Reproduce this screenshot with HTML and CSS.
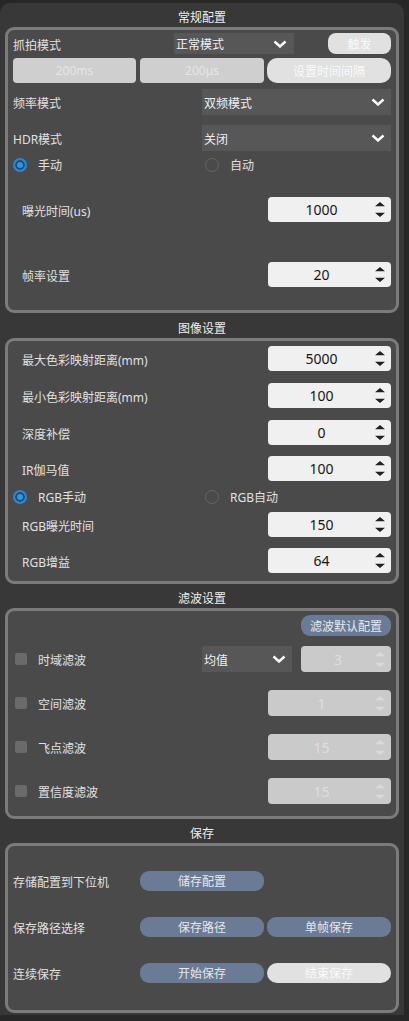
FILE: index.html
```html
<!DOCTYPE html>
<html lang="zh-CN">
<head>
<meta charset="utf-8">
<title>配置</title>
<link rel="stylesheet" href="styles.css">
</head>
<body>
<div class="window">
  <div class="sec-title t1">常规配置</div>
  <div class="group g1">
    <div class="row h21 pt3">
      <span class="label w161">抓拍模式</span>
      <div class="combo w120 cr7"><span>正常模式</span><svg class="chev" viewBox="0 0 14 8"><polyline points="1.5,1.5 7,6.5 12.5,1.5"/></svg></div>
      <button class="btn light w63 push">触发</button>
    </div>
    <div class="row h25 mt4">
      <button class="btn dis w123">200ms</button>
      <button class="btn dis w124 ml4">200μs</button>
      <button class="btn light round w124 ml3">设置时间间隔</button>
    </div>
    <div class="row h26 mt6">
      <span class="label">频率模式</span>
      <div class="combo w189 push"><span>双频模式</span><svg class="chev" viewBox="0 0 14 8"><polyline points="1.5,1.5 7,6.5 12.5,1.5"/></svg></div>
    </div>
    <div class="row h26 mt10">
      <span class="label">HDR模式</span>
      <div class="combo w189 push"><span>关闭</span><svg class="chev" viewBox="0 0 14 8"><polyline points="1.5,1.5 7,6.5 12.5,1.5"/></svg></div>
    </div>
    <div class="row h16 mt6">
      <label class="radio first"><span class="dot on"></span>手动</label>
      <label class="radio"><span class="dot"></span>自动</label>
    </div>
    <div class="row h25 mt24">
      <span class="label ind">曝光时间(us)</span>
      <div class="spin w123 push"><span class="val">1000</span><svg class="arrows" viewBox="0 0 10 15"><path d="M0 4.3L5 0L10 4.3Z M0 10.7L5 15L10 10.7Z"/></svg></div>
    </div>
    <div class="row h25 mt40">
      <span class="label ind">帧率设置</span>
      <div class="spin w123 push"><span class="val">20</span><svg class="arrows" viewBox="0 0 10 15"><path d="M0 4.3L5 0L10 4.3Z M0 10.7L5 15L10 10.7Z"/></svg></div>
    </div>
  </div>

  <div class="sec-title t2">图像设置</div>
  <div class="group g2">
    <div class="row h25 pt5">
      <span class="label ind">最大色彩映射距离(mm)</span>
      <div class="spin w123 push"><span class="val">5000</span><svg class="arrows" viewBox="0 0 10 15"><path d="M0 4.3L5 0L10 4.3Z M0 10.7L5 15L10 10.7Z"/></svg></div>
    </div>
    <div class="row h25 mt12">
      <span class="label ind">最小色彩映射距离(mm)</span>
      <div class="spin w123 push"><span class="val">100</span><svg class="arrows" viewBox="0 0 10 15"><path d="M0 4.3L5 0L10 4.3Z M0 10.7L5 15L10 10.7Z"/></svg></div>
    </div>
    <div class="row h25 mt12">
      <span class="label ind">深度补偿</span>
      <div class="spin w123 push"><span class="val">0</span><svg class="arrows" viewBox="0 0 10 15"><path d="M0 4.3L5 0L10 4.3Z M0 10.7L5 15L10 10.7Z"/></svg></div>
    </div>
    <div class="row h25 mt11">
      <span class="label ind">IR伽马值</span>
      <div class="spin w123 push"><span class="val">100</span><svg class="arrows" viewBox="0 0 10 15"><path d="M0 4.3L5 0L10 4.3Z M0 10.7L5 15L10 10.7Z"/></svg></div>
    </div>
    <div class="row h16 mt8">
      <label class="radio first"><span class="dot on"></span>RGB手动</label>
      <label class="radio"><span class="dot"></span>RGB自动</label>
    </div>
    <div class="row h25 mt7">
      <span class="label ind">RGB曝光时间</span>
      <div class="spin w123 push"><span class="val">150</span><svg class="arrows" viewBox="0 0 10 15"><path d="M0 4.3L5 0L10 4.3Z M0 10.7L5 15L10 10.7Z"/></svg></div>
    </div>
    <div class="row h25 mt11">
      <span class="label ind">RGB增益</span>
      <div class="spin w123 push"><span class="val">64</span><svg class="arrows" viewBox="0 0 10 15"><path d="M0 4.3L5 0L10 4.3Z M0 10.7L5 15L10 10.7Z"/></svg></div>
    </div>
  </div>

  <div class="sec-title t3">滤波设置</div>
  <div class="group g3">
    <div class="row h21 pt4">
      <button class="btn slate w90 push">滤波默认配置</button>
    </div>
    <div class="row h26 mt10">
      <span class="check"></span>
      <span class="label">时域滤波</span>
      <div class="combo w90 push"><span>均值</span><svg class="chev" viewBox="0 0 14 8"><polyline points="1.5,1.5 7,6.5 12.5,1.5"/></svg></div>
      <div class="spin dis w90 ml9"><span class="val">3</span><svg class="arrows" viewBox="0 0 10 15"><path d="M0 4.3L5 0L10 4.3Z M0 10.7L5 15L10 10.7Z"/></svg></div>
    </div>
    <div class="row h26 mt18">
      <span class="check"></span>
      <span class="label">空间滤波</span>
      <div class="spin dis w123 push"><span class="val">1</span><svg class="arrows" viewBox="0 0 10 15"><path d="M0 4.3L5 0L10 4.3Z M0 10.7L5 15L10 10.7Z"/></svg></div>
    </div>
    <div class="row h26 mt18">
      <span class="check"></span>
      <span class="label">飞点滤波</span>
      <div class="spin dis w123 push"><span class="val">15</span><svg class="arrows" viewBox="0 0 10 15"><path d="M0 4.3L5 0L10 4.3Z M0 10.7L5 15L10 10.7Z"/></svg></div>
    </div>
    <div class="row h26 mt18">
      <span class="check"></span>
      <span class="label">置信度滤波</span>
      <div class="spin dis w123 push"><span class="val">15</span><svg class="arrows" viewBox="0 0 10 15"><path d="M0 4.3L5 0L10 4.3Z M0 10.7L5 15L10 10.7Z"/></svg></div>
    </div>
  </div>

  <div class="sec-title t4">保存</div>
  <div class="group g4">
    <div class="row h20 pt25">
      <span class="label w127">存储配置到下位机</span>
      <button class="btn slate w124">储存配置</button>
    </div>
    <div class="row h20 mt26">
      <span class="label w127">保存路径选择</span>
      <button class="btn slate w124">保存路径</button>
      <button class="btn slate w124 ml3">单帧保存</button>
    </div>
    <div class="row h20 mt26">
      <span class="label w127">连续保存</span>
      <button class="btn slate w124">开始保存</button>
      <button class="btn light round w124 ml3">结束保存</button>
    </div>
  </div>
</div>
</body>
</html>
```

FILE: styles.css
```css
* { box-sizing: border-box; margin: 0; padding: 0; }

html, body { background: #272727; }

body {
  width: 409px;
  height: 1021px;
  overflow: hidden;
  font-family: "Noto Sans", "Noto Sans CJK SC", sans-serif;
  font-size: 12px;
  color: #e2e2e2;
}

.window {
  width: 404px;
  margin-top: 3px;
  padding: 0 5px 2px 5px;
  background: #383838;
  border-radius: 10px 10px 0 0;
}

.sec-title {
  padding-top: 5px;
  text-align: center;
  color: #eeeeee;
  line-height: 20px;
  height: 24px;
  overflow: visible;
}
.sec-title.t2 { height: 25px; padding-top: 6px; }

.group {
  border: 3px solid #7b7b7b;
  border-radius: 9px;
  background: #4a4a4a;
  padding: 0 5px;
}
.g1 { height: 286px; }
.g2 { height: 246px; }
.g3 { height: 211px; }
.g4 { height: 170px; }

.row {
  display: flex;
  align-items: center;
  box-sizing: content-box;
}
.h16 { height: 16px; }
.h20 { height: 20px; }
.h21 { height: 21px; }
.h25 { height: 25px; }
.h26 { height: 26px; }

.pt3 { padding-top: 3px; }
.pt4 { padding-top: 4px; }
.pt5 { padding-top: 5px; }
.pt25 { padding-top: 25px; }
.mt4 { margin-top: 4px; }
.mt6 { margin-top: 6px; }
.mt7 { margin-top: 7px; }
.mt8 { margin-top: 8px; }
.mt10 { margin-top: 10px; }
.mt11 { margin-top: 11px; }
.mt12 { margin-top: 12px; }
.mt18 { margin-top: 18px; }
.mt24 { margin-top: 24px; }
.mt26 { margin-top: 26px; }
.mt40 { margin-top: 40px; }
.ml3 { margin-left: 3px; }
.ml4 { margin-left: 4px; }
.ml9 { margin-left: 9px; }
.push { margin-left: auto; }

.w63 { width: 63px; flex: none; }
.w90 { width: 90px; flex: none; }
.w120 { width: 120px; flex: none; }
.w123 { width: 123px; flex: none; }
.w124 { width: 124px; flex: none; }
.w127 { width: 127px; flex: none; }
.w161 { width: 161px; flex: none; }
.w189 { width: 189px; flex: none; }

.label { white-space: nowrap; color: #e0e0e0; padding-top: 2px; }
.label.ind { padding-left: 9px; }

.combo {
  height: 100%;
  background: #575757;
  display: flex;
  align-items: center;
  padding: 0 6px 0 2px;
  color: #f0f0f0;
}
.combo.cr7 { padding-right: 7px; }
.combo span { flex: 1; padding-top: 1px; }
.chev {
  width: 14px;
  height: 8px;
  fill: none;
  stroke: #ffffff;
  stroke-width: 2.4;
}

.btn {
  height: 100%;
  border: none;
  font: inherit;
  font-size: 12px;
  display: flex;
  align-items: center;
  justify-content: center;
  white-space: nowrap;
}
.btn.light { background: #e1e1e1; color: #fafafa; border-radius: 8px; }
.btn.light.round { border-radius: 10px; }
.btn.dis { background: #cfcfcf; color: #e6e6e6; border-radius: 4px; }
.btn.slate { background: #6b7b95; color: #e6e8ec; border-radius: 9px; }

.radio {
  display: flex;
  align-items: center;
  color: #e0e0e0;
}
.radio.first { width: 192px; flex: none; }
.dot {
  width: 14px;
  height: 14px;
  border-radius: 50%;
  border: 1px solid #666666;
  margin-right: 11px;
  flex: none;
}
.dot.on {
  border: 2px solid #2c86d0;
  background: #1c9df3;
  box-shadow: inset 0 0 0 2px #25496e;
}

.spin {
  height: 100%;
  background: #f0f0f0;
  border-radius: 4px;
  display: flex;
  align-items: center;
  padding-right: 6px;
  color: #161616;
  font-size: 14px;
}
.spin .val { flex: 1; text-align: center; }
.arrows { width: 10px; height: 15px; fill: #202020; flex: none; }
.spin.dis { background: #cacaca; color: #dfdfdf; }
.spin.dis .arrows { fill: #dadada; }

.check {
  width: 12px;
  height: 12px;
  background: #6a6a6a;
  border-radius: 2px;
  margin-left: 2px;
  margin-right: 11px;
  flex: none;
}
```
